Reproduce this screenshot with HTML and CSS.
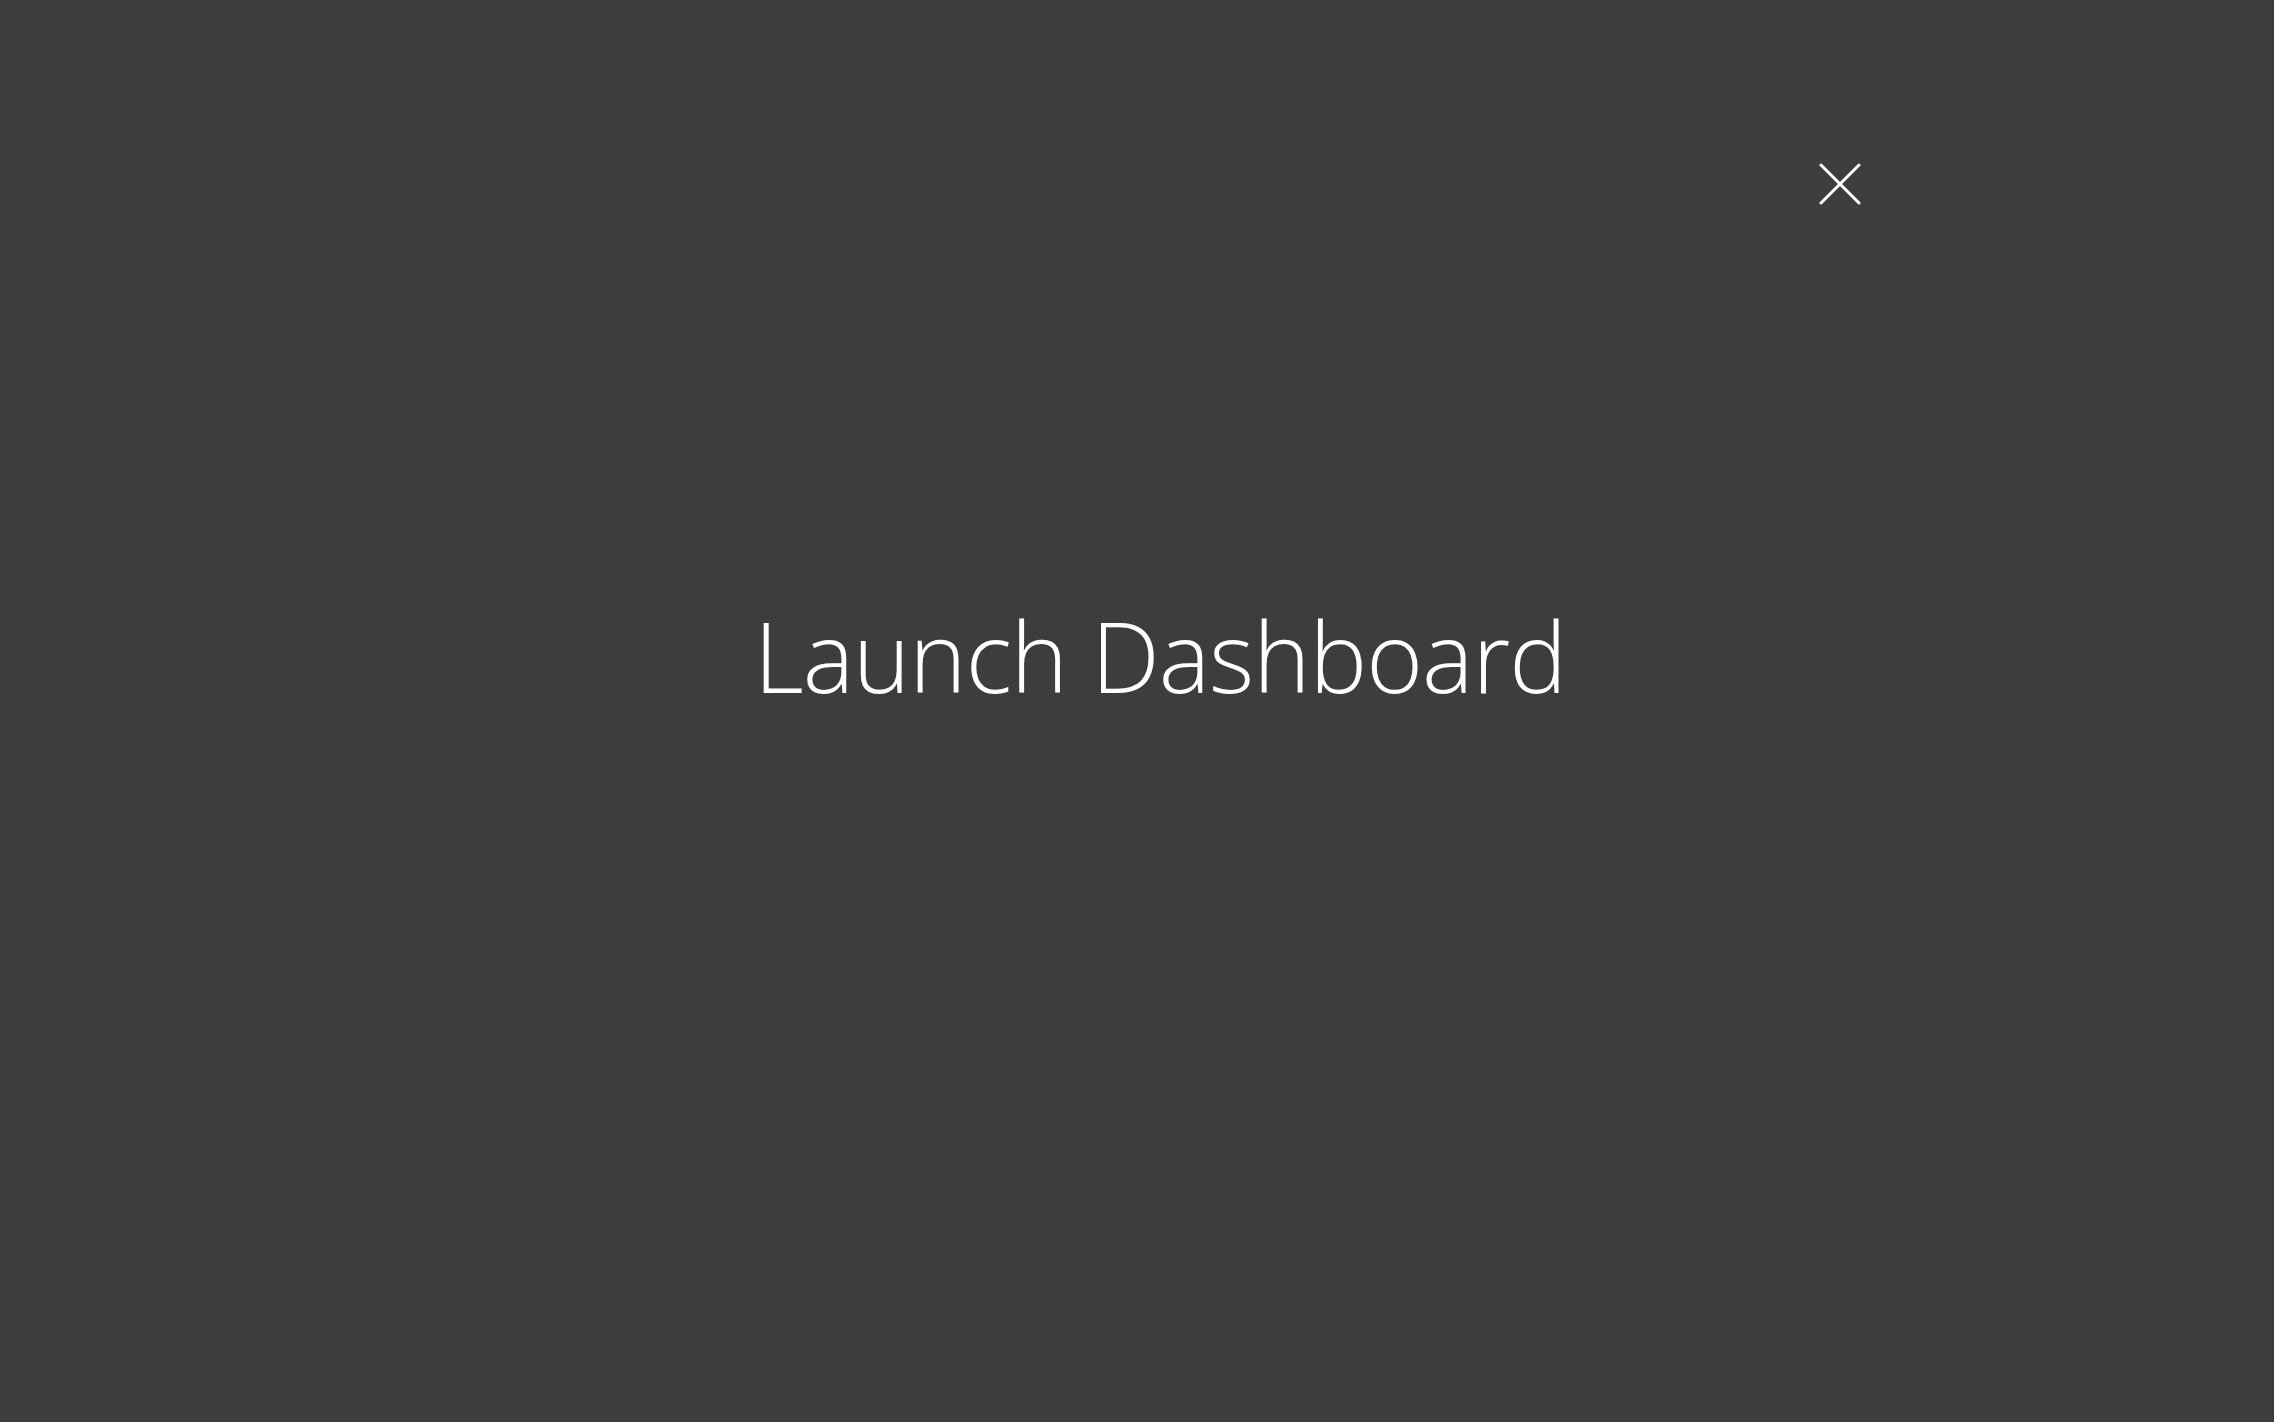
FILE: index.html
```html
<!DOCTYPE html>
<html lang="en">
<head>
<meta charset="utf-8">
<title>Launch Dashboard</title>
<link rel="stylesheet" href="styles.css">
</head>
<body>
<div class="overlay">
  <div class="panel">
    <div class="topbar">
      <button class="close" aria-label="Close">
        <svg width="42" height="42" viewBox="0 0 42 42"><path d="M2 2 L40 40 M40 2 L2 40" stroke="#fff" stroke-width="3" stroke-linecap="round" fill="none"/></svg>
      </button>
    </div>
    <div class="content">
      <h1 class="title">Launch Dashboard</h1>
    </div>
  </div>
</div>
</body>
</html>
```
FILE: styles.css
```css
html, body {
  margin: 0;
  padding: 0;
  height: 100%;
  background: #3d3d3d;
}
.overlay {
  height: 100vh;
  box-sizing: border-box;
  padding-left: 46px;
  display: flex;
}
.panel {
  flex: 1;
  display: flex;
  flex-direction: column;
}
.topbar {
  display: flex;
  justify-content: flex-end;
  padding: 163px 413px 0 0;
}
.close {
  background: none;
  border: 0;
  padding: 0;
  width: 42px;
  height: 42px;
  cursor: pointer;
}
.close svg { display: block; }
.content {
  display: flex;
  justify-content: center;
  padding-top: 402px;
}
.title {
  margin: 0;
  font-family: "Open Sans", sans-serif;
  font-weight: 300;
  font-size: 97px;
  line-height: 1;
  letter-spacing: -1px;
  color: #fff;
}
```
